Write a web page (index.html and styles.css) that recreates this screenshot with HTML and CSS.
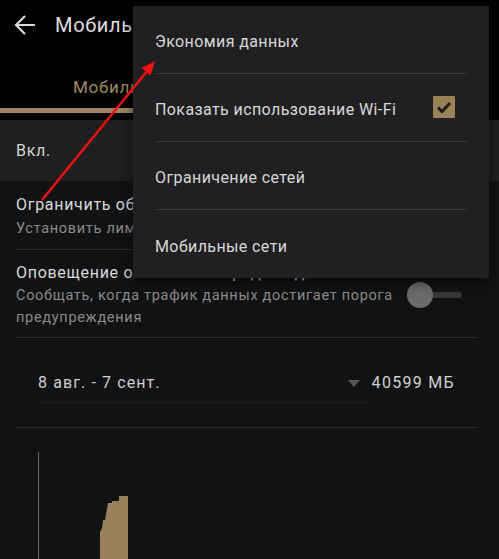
FILE: index.html
```html
<!DOCTYPE html>
<html lang="ru">
<head>
<meta charset="utf-8">
<title>Мобильные данные</title>
<link rel="stylesheet" href="styles.css">
</head>
<body>
<div class="screen">
  <header class="appbar">
    <svg class="back" width="24" height="24" viewBox="0 0 24 24"><path d="M22 12H3M12 3l-9 9 9 9" fill="none" stroke="#d9d9d9" stroke-width="2.2"/></svg>
    <h1 class="title">Мобильные данные</h1>
  </header>
  <nav class="tabs">
    <div class="tab active">
      <span class="tab-label">Мобильные</span>
      <span class="tab-indicator"></span>
    </div>
    <div class="tab"><span class="tab-label">Wi-Fi</span></div>
  </nav>
  <section class="master">Вкл.</section>
  <div class="list">
    <div class="row">
      <div class="row-title">Ограничить объём трафика</div>
      <div class="row-sub">Установить лимит</div>
    </div>
    <div class="row row-switch">
      <div class="row-text">
        <div class="row-title">Оповещение об объёме передачи данных</div>
        <div class="row-sub">Сообщать, когда трафик данных достигает порога<br>предупреждения</div>
      </div>
      <div class="switch"><span class="track"></span><span class="thumb"></span></div>
    </div>
    <div class="period">
      <div class="spinner">
        <span class="period-range">8 авг. - 7 сент.</span>
        <span class="caret"></span>
      </div>
      <div class="period-total">40599 МБ</div>
    </div>
    <div class="chart">
      <svg width="499" height="131" viewBox="0 428 499 131">
        <line x1="38.5" y1="452" x2="38.5" y2="559" stroke="#6a6a6a" stroke-width="1"/>
        <polygon fill="#98805a" points="100,559 100,532 102,528 103,520 105,520 108,503 112,503 112,501 119,501 119,496 128,496 128,559"/>
      </svg>
    </div>
  </div>

  <div class="menu">
    <div class="menu-item">Экономия данных</div>
    <div class="menu-item">Показать использование Wi-Fi
      <span class="checkbox"><svg width="22" height="22" viewBox="0 0 22 22"><path d="M5 11.5l4 4 8-8.5" fill="none" stroke="#1d1d1f" stroke-width="3"/></svg></span>
    </div>
    <div class="menu-item">Ограничение сетей</div>
    <div class="menu-item">Мобильные сети</div>
  </div>

  <svg class="annot" width="499" height="559" viewBox="0 0 499 559">
    <line x1="42" y1="200" x2="148" y2="70" stroke="#ee1111" stroke-width="2.5"/>
    <polygon fill="#ee1111" points="155,61 150.5,75.5 141.5,68"/>
  </svg>
</div>
</body>
</html>
```

FILE: styles.css
```css
* { box-sizing: border-box; margin: 0; padding: 0; }
html, body { width: 499px; height: 559px; overflow: hidden; }
body {
  background: #111213;
  font-family: Roboto, "Noto Sans", sans-serif;
  color: #dcdcdc;
  letter-spacing: 0.7px;
}
.screen { position: relative; width: 499px; height: 559px; overflow: hidden; }

.appbar {
  height: 50px;
  background: #000;
  display: flex;
  align-items: center;
  padding-left: 13px;
}
.back { width: 24px; height: 24px; margin-right: 18px; }
.title {
  font-size: 20px; font-weight: 400; color: #dedede;
  white-space: nowrap;
}

.tabs {
  height: 70px;
  background: #000;
  display: flex;
}
.tab { flex: 1; display: flex; flex-direction: column; align-items: flex-start; }
.tab-label {
  margin-top: 25px;
  height: 24px;
  line-height: 24px;
  font-size: 17px;
  color: #a38b5f;
  padding-left: 73px;
  white-space: nowrap;
}
.tab-indicator {
  margin-top: 9px;
  align-self: stretch;
  height: 5px;
  background: #a08660;
}

.master {
  height: 61px;
  background: #1f1f21;
  display: flex;
  align-items: center;
  padding-left: 16px;
  font-size: 16px;
  color: #d6d6d6;
}

.list { padding: 0 22px 0 16px; }
.row { border-bottom: 1px solid #2e2e30; padding: 12px 0 8px; }
.row-title { font-size: 16px; line-height: 24px; color: #dadada; white-space: nowrap; }
.row-sub { font-size: 14.5px; line-height: 24px; color: #8a8a8a; white-space: nowrap; }
.row-switch { display: flex; align-items: center; padding: 11px 0 8px; }
.row-switch .row-sub { line-height: 22px; }
.row-text { flex: 1; }
.switch { position: relative; width: 55px; height: 26px; margin-right: 15px; }
.track {
  position: absolute; left: 12px; right: 0; top: 10px; height: 6px;
  border-radius: 3px; background: #363638;
}
.thumb {
  position: absolute; left: 0; top: 0; width: 26px; height: 26px;
  border-radius: 50%; background: #6b6b6b;
}

.period {
  height: 90px;
  border-bottom: 1px solid #2a2a2c;
  display: flex;
  align-items: flex-start;
  padding: 33px 22px 0 22px;
}
.spinner {
  flex: 1;
  display: flex;
  align-items: center;
  height: 32px;
  padding-bottom: 7px;
  border-bottom: 1px solid #1d1d1f;
}
.period-range {
  font-size: 16px;
  letter-spacing: 1.1px;
  color: #cfcfcf;
  line-height: 24px;
}
.caret {
  width: 0; height: 0;
  margin-left: auto;
  margin-right: 10px;
  border-left: 6.5px solid transparent;
  border-right: 6.5px solid transparent;
  border-top: 7px solid #555;
}
.period-total {
  font-size: 16px; letter-spacing: 1.3px; color: #d2d2d2;
  line-height: 24px; margin-left: 2px;
}

.chart { margin: 0 -22px 0 -16px; height: 131px; }
.chart svg { display: block; }

.menu {
  position: absolute;
  left: 133px; top: 6px;
  width: 356px; height: 272px;
  background: #202022;
  box-shadow: 0 4px 12px rgba(0,0,0,0.6);
  padding: 0 22px;
}
.menu-item {
  height: 68px;
  display: flex;
  align-items: center;
  padding-top: 4px;
  border-bottom: 1px solid #3a3a3c;
  font-size: 16px;
  letter-spacing: 0.4px;
  color: #d8d8d8;
  position: relative;
}
.menu-item:last-child { border-bottom: none; }
.checkbox {
  position: absolute;
  right: 12px;
  top: 22px;
  width: 22px; height: 22px;
  background: #9a8257;
  border-radius: 1px;
}
.checkbox svg { display: block; }

.annot { position: absolute; left: 0; top: 0; pointer-events: none; }
```
